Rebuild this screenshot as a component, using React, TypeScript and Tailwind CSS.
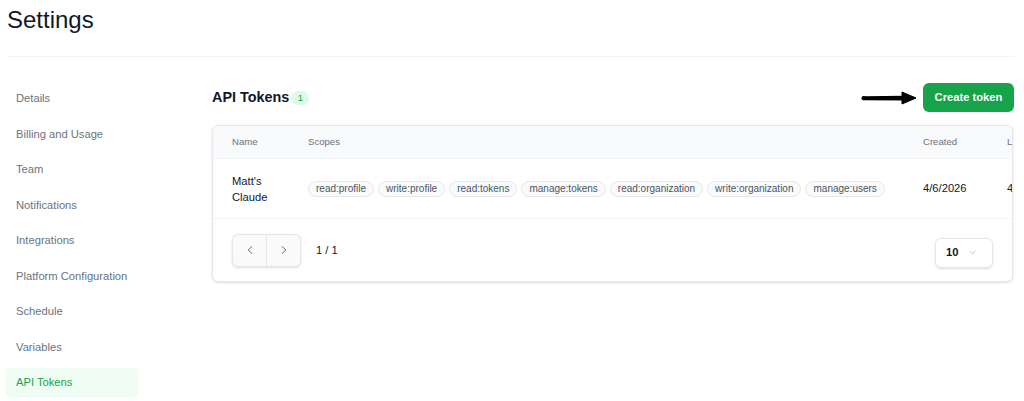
import React from "react";
import { ChevronLeft, ChevronRight, ChevronDown } from "lucide-react";

const navItems = [
  "Details",
  "Billing and Usage",
  "Team",
  "Notifications",
  "Integrations",
  "Platform Configuration",
  "Schedule",
  "Variables",
  "API Tokens",
];

const scopes = [
  "read:profile",
  "write:profile",
  "read:tokens",
  "manage:tokens",
  "read:organization",
  "write:organization",
  "manage:users",
];

function Arrow() {
  return (
    <svg width="56" height="14" viewBox="0 0 56 14" className="shrink-0">
      <path d="M2.5 5.2 L43 4.8 L43 9.4 L2.5 9.2 Z" fill="#000" />
      <circle cx="2.6" cy="7.2" r="2.1" fill="#000" />
      <path d="M41 1 L55 7 L41 13 Z" fill="#000" strokeLinejoin="round" stroke="#000" strokeWidth="1" />
    </svg>
  );
}

export default function App() {
  return (
    <div
      className="w-[1024px] h-[401px] overflow-hidden bg-white pl-[6px] pr-[10px]"
      style={{ fontFamily: '"Liberation Sans", Arial, Helvetica, sans-serif' }}
    >
      <div className="pt-[4px] pb-[20px] ml-px border-b border-gray-100">
        <h1 className="text-[24px] leading-[32px] text-[#111827]">Settings</h1>
      </div>

      <div className="flex mt-[27px]">
        <nav className="w-[132px] shrink-0 flex flex-col gap-[6.5px]">
          {navItems.map((item) => {
            const active = item === "API Tokens";
            return (
              <div
                key={item}
                className={
                  active
                    ? "h-[29px] px-[10px] flex items-center rounded-[4px] bg-[#f0fdf4] text-[#16a34a] text-[11.2px] whitespace-nowrap"
                    : "h-[29px] px-[10px] flex items-center rounded-[4px] text-[#6b7280] text-[11.2px] whitespace-nowrap"
                }
              >
                {item}
              </div>
            );
          })}
        </nav>

        <main className="ml-[74px] flex-1 min-w-0 -mt-px">
          <div className="flex items-center justify-between h-[29px]">
            <div className="flex items-center">
              <h2 className="text-[14.4px] font-bold text-[#111827]">API Tokens</h2>
              <span className="ml-[2px] mt-[2px] h-[14px] w-[18px] rounded-full bg-[#dcfce7] text-[#16a34a] text-[9.6px] flex items-center justify-center">
                1
              </span>
            </div>
            <div className="flex items-center gap-[6px]">
              <Arrow />
              <button className="h-[29px] w-[91px] rounded-[6px] bg-[#16a34a] text-white text-[11.2px] font-bold flex items-center justify-center">
                Create token
              </button>
            </div>
          </div>

          <div className="mt-[13px] mr-px rounded-[6px] border border-gray-200 shadow-sm overflow-hidden bg-white">
            <div className="flex h-[33px] items-center bg-[#f9fafb] border-b border-gray-100 text-[9.6px] text-[#6b7280] whitespace-nowrap">
              <div className="w-[95px] shrink-0 pl-[19px]">Name</div>
              <div className="w-[615px] shrink-0">Scopes</div>
              <div className="w-[84px] shrink-0">Created</div>
              <div className="w-[100px] shrink-0">Last used</div>
            </div>
            <div className="flex h-[60px] items-center border-b border-gray-100 whitespace-nowrap">
              <div className="w-[95px] shrink-0 pl-[19px] pr-[16px] text-[11.2px] leading-[16px] text-[#111827] whitespace-normal">
                Matt's Claude
              </div>
              <div className="w-[615px] shrink-0 flex items-center gap-[4px]">
                {scopes.map((s) => (
                  <span
                    key={s}
                    className="h-[16px] px-[7px] rounded-full border border-gray-200 bg-[#f9fafb] text-[10px] leading-none text-[#4b5563] flex items-center"
                  >
                    {s}
                  </span>
                ))}
              </div>
              <div className="w-[84px] shrink-0 text-[11.2px] text-[#111827]">4/6/2026</div>
              <div className="w-[100px] shrink-0 text-[11.2px] text-[#111827]">4/6/2026</div>
            </div>
            <div className="flex items-center justify-between h-[62px] px-[19px]">
              <div className="flex items-center">
                <div className="flex h-[33px] rounded-[6px] border border-gray-200 shadow-sm bg-[#fafafa] overflow-hidden">
                  <button className="w-[33px] h-full flex items-center justify-center text-[#4b5563]">
                    <ChevronLeft size={14} strokeWidth={1.5} />
                  </button>
                  <div className="w-px bg-gray-200" />
                  <button className="w-[33px] h-full flex items-center justify-center text-[#4b5563]">
                    <ChevronRight size={14} strokeWidth={1.5} />
                  </button>
                </div>
                <span className="ml-[15px] text-[11.2px] text-[#111827]">1 / 1</span>
              </div>
              <div className="mt-[5px] h-[30px] w-[58px] rounded-[6px] border border-gray-200 shadow-sm bg-white flex items-center pl-[10px] gap-[9px]">
                <span className="text-[11.2px] font-bold text-[#111827]">10</span>
                <ChevronDown size={11} strokeWidth={1.5} className="text-[#9ca3af]" />
              </div>
            </div>
          </div>
        </main>
      </div>
    </div>
  );
}
